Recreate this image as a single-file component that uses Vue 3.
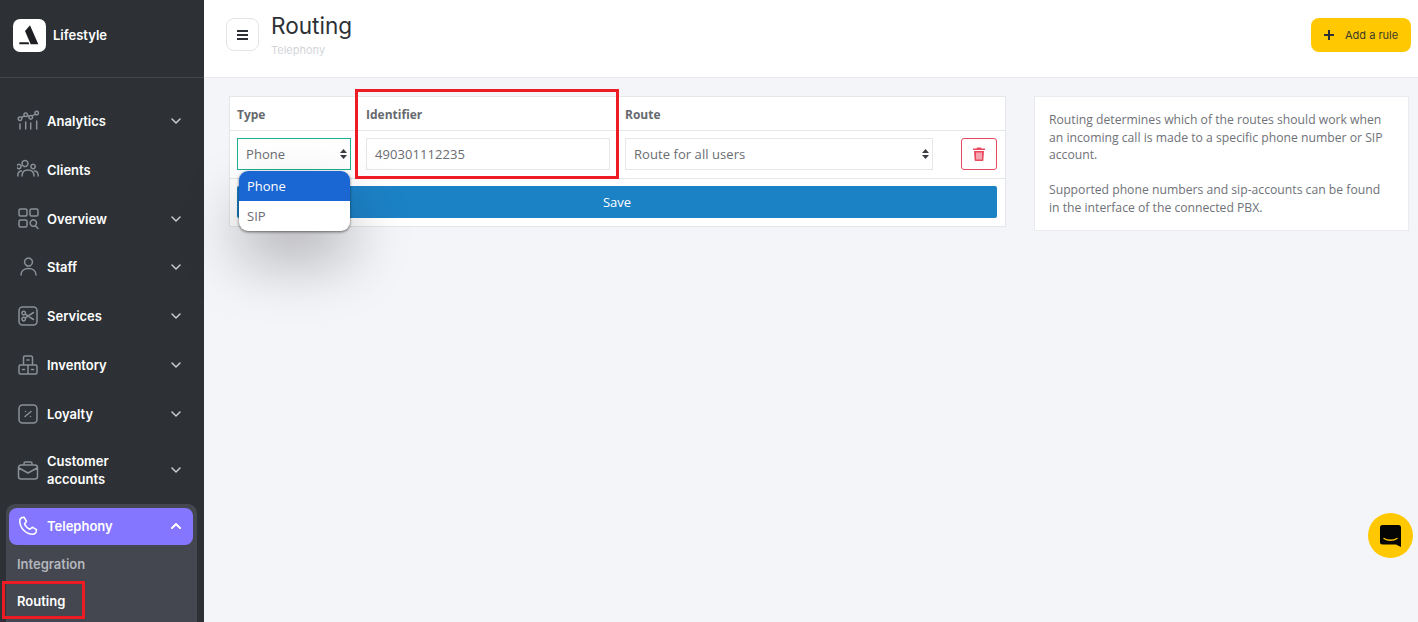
<script setup>
const nav = [
  { label: 'Analytics', chevron: true, d: 'M4.800 8.700a1.800 1.800 0 1 0 0 .1M10.500 4.700a1.800 1.800 0 1 0 0 .1M15.500 7.300a1.800 1.800 0 1 0 0 .1M21.500 3a1.800 1.800 0 1 0 0 .1M4.400 7.500 7.300 5.800M10.300 5.500l1.800 1M15.200 6.200l3-2.200M3 14v5M8.700 12v7M13.700 13v6M19.700 11v8' },
  { label: 'Clients', d: 'M11 4.500a3 3 0 1 0 0 .1M4 7.500a2.200 2.200 0 1 0 0 .1M18.300 7.500a2.200 2.200 0 1 0 0 .1M5 17c0-4 2.500-6 6-6s6 2 6 6M.8 17c0-3 1.200-5 3.700-5M21.200 17c0-3-1.200-5-3.700-5' },
  { label: 'Overview', chevron: true, d: 'M3.500 1h5a1.500 1.500 0 0 1 1.500 1.500v4a1.500 1.500 0 0 1-1.500 1.500h-5a1.500 1.500 0 0 1-1.500-1.500v-4a1.500 1.500 0 0 1 1.500-1.500zM14.500 1h5a1.500 1.500 0 0 1 1.500 1.500v4a1.500 1.500 0 0 1-1.500 1.500h-5a1.500 1.500 0 0 1-1.500-1.500v-4a1.500 1.500 0 0 1 1.500-1.500zM3.500 12h5a1.500 1.500 0 0 1 1.500 1.500v4a1.500 1.500 0 0 1-1.500 1.500h-5a1.500 1.500 0 0 1-1.500-1.500v-4a1.500 1.500 0 0 1 1.500-1.500zM19.500 15a3.200 3.200 0 1 0 0 .1M18.500 18l2.500 2.500' },
  { label: 'Staff', chevron: true, d: 'M15.500 6a4 4 0 1 0 0 .1M4 19c0-4 3-6.500 7.500-6.500s7.500 2.500 7.500 6.500' },
  { label: 'Services', chevron: true, d: 'M5.500 2h11a3.500 3.500 0 0 1 3.500 3.500v11a3.500 3.500 0 0 1-3.500 3.500h-11a3.500 3.500 0 0 1-3.500-3.500v-11a3.500 3.500 0 0 1 3.500-3.500zM8.500 8a1.800 1.800 0 1 0 0 .1M8.500 14a1.800 1.800 0 1 0 0 .1M8.300 9.200 16.500 14.500M8.300 12.800 16.500 7.500' },
  { label: 'Inventory', chevron: true, d: 'M8 2h6a1.500 1.500 0 0 1 1.500 1.500V11h-9V3.500A1.500 1.500 0 0 1 8 2zM3.500 11H11v9H3.500A1.500 1.500 0 0 1 2 18.500v-6A1.500 1.500 0 0 1 3.500 11zM11 11h7.500a1.500 1.500 0 0 1 1.500 1.500v6a1.500 1.500 0 0 1-1.500 1.500H11zM10 6h2M5.500 15.500h2M14.500 15.500h2' },
  { label: 'Loyalty', chevron: true, d: 'M5.500 2h11a3.500 3.500 0 0 1 3.500 3.500v11a3.500 3.500 0 0 1-3.500 3.500h-11a3.500 3.500 0 0 1-3.500-3.500v-11a3.500 3.500 0 0 1 3.500-3.500zM14 8.500 8 13.500M8.500 8.500v.1M13.500 13.500v.1' },
  { label: 'Customer accounts', chevron: true, two: true, d: 'M4 6h14a2.500 2.500 0 0 1 2.500 2.500v9a2.500 2.500 0 0 1-2.500 2.500H4a2.500 2.500 0 0 1-2.500-2.500v-9A2.500 2.500 0 0 1 4 6zM7 6V4.500A1.500 1.500 0 0 1 8.500 3h5A1.500 1.500 0 0 1 15 4.500V6M2 9l9 5 9-5' }
]
</script>

<template>
  <div class="page">
    <aside class="sidebar">
      <div class="brand">
        <div class="logo">
          <svg width="33" height="33" viewBox="0 0 33 33"><path d="M17 6.300 25.300 25.300h-7.600L12 12z" fill="#1d1f22" /><path d="M6.300 23.300h9.200l.8 2H6.300z" fill="#1d1f22" /></svg>
        </div>
        <span class="brand-name">Lifestyle</span>
      </div>
      <nav class="nav">
        <a v-for="item in nav" :key="item.label" class="item" :class="{ two: item.two }">
          <svg class="icon" width="22" height="22" viewBox="0 0 22 22"><path :d="item.d" /></svg>
          <span class="label">{{ item.label }}</span>
          <svg v-if="item.chevron" class="chev" width="10" height="6" viewBox="0 0 10 6"><path d="M1 1l4 4 4-4" /></svg>
        </a>
        <div class="group">
          <a class="item active">
            <svg class="icon" width="22" height="22" viewBox="0 0 22 22"><path d="M5 2.500 7 2.200l2.500 4.300-2 2.200c1 2.500 3 4.500 5.500 5.500l2.200-2 4.300 2.500-.3 2c-.5 1.500-2 2.500-3.500 2.500C9 19.200 2.800 13 2.800 6c0-1.500.9-3 2.200-3.500z" /></svg>
            <span class="label">Telephony</span>
            <svg class="chev" width="10" height="6" viewBox="0 0 10 6"><path d="M1 5l4-4 4 4" /></svg>
          </a>
          <a class="sub">Integration</a>
          <a class="sub current">Routing</a>
        </div>
      </nav>
    </aside>

    <div class="main">
      <header class="topbar">
        <button class="burger" type="button">
          <svg width="11" height="10" viewBox="0 0 11 10"><path d="M0 1h11M0 5h11M0 9h11" /></svg>
        </button>
        <div class="heading">
          <h1>Routing</h1>
          <p>Telephony</p>
        </div>
        <button class="add" type="button">
          <svg width="10" height="10" viewBox="0 0 10 10"><path d="M5 0v10M0 5h10" /></svg>
          <span>Add a rule</span>
        </button>
      </header>

      <section class="content">
        <div class="table">
          <div class="grid head">
            <span>Type</span>
            <span>Identifier</span>
            <span>Route</span>
          </div>
          <div class="grid row">
            <div class="field select focus">
              <span>Phone</span>
              <svg class="updown" width="7" height="10" viewBox="0 0 7 10"><path d="M3.500 0 7 4H0zM3.500 10 0 6h7z" /></svg>
            </div>
            <div class="field">490301112235</div>
            <div class="field select">
              <span>Route for all users</span>
              <svg class="updown" width="7" height="10" viewBox="0 0 7 10"><path d="M3.500 0 7 4H0zM3.500 10 0 6h7z" /></svg>
            </div>
            <button class="trash" type="button">
              <svg width="12" height="14" viewBox="0 0 12 14"><path fill-rule="evenodd" d="M0 1.500h3.500L4 .5h4l.5 1H12V3H0zM1 4h10l-.6 9a1 1 0 0 1-1 1H2.600a1 1 0 0 1-1-1zM3.500 5.500V12.500h1V5.500zM5.500 5.500V12.500h1V5.500zM7.500 5.500V12.500h1V5.500z" /></svg>
            </button>
          </div>
          <div class="save-row">
            <button class="save" type="button">Save</button>
          </div>
        </div>

        <aside class="info">
          <p>Routing determines which of the routes should work when an incoming call is made to a specific phone number or SIP account.</p>
          <p>Supported phone numbers and sip-accounts can be found in the interface of the connected PBX.</p>
        </aside>
      </section>
    </div>

    <div class="dropdown">
      <div class="opt selected">Phone</div>
      <div class="opt">SIP</div>
    </div>

    <div class="mark mark-id"></div>
    <div class="mark mark-route"></div>

    <div class="chat">
      <svg width="21" height="22" viewBox="0 0 21 22"><path d="M2.500 0h16A2.500 2.500 0 0 1 21 2.500V22l-5-2.500H2.500A2.500 2.500 0 0 1 0 17V2.500A2.500 2.500 0 0 1 2.500 0z" fill="#050505" /><path d="M4 13.500c3.500 2.300 9.500 2.300 13 0" fill="none" stroke="#ffc800" stroke-width="1.400" stroke-linecap="round" /></svg>
    </div>
  </div>
</template>

<style>
html, body { margin: 0; background: #f4f5f9; }
</style>

<style scoped>
.page {
  position: relative;
  display: flex;
  width: 100%;
  height: 622px;
  overflow: hidden;
  background: #f4f5f9;
  font-family: "Open Sans", sans-serif;
}
.sidebar {
  flex: 0 0 204px;
  height: 622px;
  overflow: hidden;
  background: #2d3136;
  font-family: Inter, sans-serif;
}
.brand {
  display: flex;
  align-items: center;
  gap: 7px;
  height: 77px;
  padding: 0 13px;
  border-bottom: 1px solid #43464b;
  box-sizing: content-box;
  width: 178px;
}
.logo {
  width: 33px;
  height: 33px;
  margin-top: -7px;
  background: #fff;
  border-radius: 7px;
}
.logo svg { display: block; }
.brand-name {
  margin-top: -7px;
  color: #fff;
  font-size: 13px;
  font-weight: 600;
}
.nav {
  display: flex;
  flex-direction: column;
  gap: 12px;
  padding: 24.600px 11px 0 9px;
}
.item {
  display: flex;
  align-items: center;
  gap: 8px;
  height: 36.800px;
  padding: 0 12px 0 8px;
  border-radius: 8px;
  color: #fff;
  font-size: 13px;
  font-weight: 600;
  line-height: 18px;
  box-sizing: border-box;
}
.item.two { height: 51px; }
.label { flex: 1; width: 100px; }
.two .label { flex: 0 0 80px; margin-right: auto; }
.icon { flex: 0 0 22px; fill: none; stroke: #8b8f96; stroke-width: 1.500; stroke-linecap: round; stroke-linejoin: round; }
.chev { flex: 0 0 10px; fill: none; stroke: #c9ccd1; stroke-width: 1.500; stroke-linecap: round; stroke-linejoin: round; }
.group {
  margin: -3.200px -4px 0 -3px;
  padding: 4px 4px 40px 3px;
  background: #44474f;
  border-radius: 9px;
}
.item.active { height: 37px; background: #8576ff; }
.active .icon { stroke: #fff; }
.active .chev { stroke: #fff; stroke-width: 2; }
.sub {
  display: flex;
  align-items: center;
  height: 37px;
  padding: 2px 0 0 8px;
  box-sizing: border-box;
  color: #b4b7bd;
  font-size: 13px;
  font-weight: 600;
}
.current { color: #fff; }
.main {
  flex: 1;
  min-width: 0;
  display: flex;
  flex-direction: column;
}
.topbar {
  display: flex;
  align-items: flex-start;
  height: 77px;
  padding: 0 7px 0 22px;
  background: #fff;
  border-bottom: 1px solid #e9ebf0;
  font-family: Inter, sans-serif;
}
.burger {
  display: flex;
  align-items: center;
  justify-content: center;
  width: 33px;
  height: 33px;
  margin-top: 18px;
  padding: 0;
  background: #fff;
  border: 1px solid #e2e4e9;
  border-radius: 8px;
}
.burger svg { fill: none; stroke: #2d3136; stroke-width: 2; }
.heading { margin-left: 12px; flex: 1; }
.heading h1 {
  margin: 11px 0 0;
  color: #2d3136;
  font-size: 22.600px;
  font-weight: 400;
  line-height: 30px;
}
.heading p {
  margin: 2px 0 0;
  color: #d3d5da;
  font-size: 11px;
  line-height: 14px;
}
.add {
  display: flex;
  align-items: center;
  gap: 11px;
  width: 100px;
  height: 34px;
  margin-top: 18px;
  padding: 0 0 0 13px;
  background: #ffc800;
  border: 0;
  border-radius: 8px;
  color: #3a3a2c;
  font-family: Inter, sans-serif;
  font-size: 11px;
}
.add svg { fill: none; stroke: #2d3136; stroke-width: 2; }
.content {
  display: flex;
  align-items: flex-start;
  gap: 28px;
  padding: 18px 9px 0 25px;
}
.table {
  width: 777px;
  box-sizing: border-box;
  background: #fff;
  border: 1px solid #e4e6ea;
  color: #6a6d72;
  font-size: 13px;
}
.grid {
  display: grid;
  grid-template-columns: 114px 244px 308px 1fr;
  column-gap: 15px;
  padding: 0 8px 0 7px;
}
.head {
  align-items: center;
  height: 32px;
  padding-top: 1px;
  font-size: 12px;
  font-weight: 700;
  color: #66696e;
  border-bottom: 1px solid #e4e6ea;
}
.row {
  align-items: start;
  height: 40px;
  padding-top: 7px;
  border-bottom: 1px solid #e4e6ea;
}
.field {
  display: flex;
  align-items: center;
  justify-content: space-between;
  height: 32px;
  box-sizing: border-box;
  padding: 0 8px;
  border: 1px solid #e4e6ea;
  font-size: 13px;
  letter-spacing: .06px;
  color: #6a6d72;
}
.select { padding-right: 3px; }
.focus { border-color: #1fb08f; }
.updown { fill: #3a3d42; }
.trash {
  justify-self: end;
  display: flex;
  align-items: center;
  justify-content: center;
  width: 36px;
  height: 32px;
  padding: 0;
  background: #fff;
  border: 1px solid #ea4a5f;
  border-radius: 3px;
}
.trash svg { fill: #ea4a5f; }
.save-row { padding: 7px 8px 8px 7px; }
.save {
  display: block;
  width: 100%;
  height: 32px;
  background: #1c82c6;
  border: 0;
  border-radius: 2px;
  color: #fff;
  font-family: "Open Sans", sans-serif;
  font-size: 13px;
}
.info {
  width: 375px;
  box-sizing: border-box;
  padding: 14px 20px 14px 14px;
  background: #fff;
  border: 1px solid #e9ebf0;
  color: #6f7278;
  font-size: 12.200px;
  line-height: 17.500px;
}
.info p { margin: 0 0 17.500px; }
.info p:last-child { margin: 0; }
.dropdown {
  position: absolute;
  left: 239px;
  top: 171px;
  width: 111px;
  overflow: hidden;
  background: #fff;
  border-radius: 9px;
  box-shadow: 0 1px 3px rgba(0, 0, 0, .55), 0 30px 60px rgba(0, 0, 0, .28);
  font-size: 13px;
  color: #6a6d72;
}
.opt {
  height: 30px;
  line-height: 30px;
  padding-left: 8px;
}
.selected { background: #1a66d2; color: #fff; }
.mark {
  position: absolute;
  box-sizing: border-box;
  border: 3px solid #ed1c24;
  pointer-events: none;
}
.mark-id { left: 355px; top: 89px; width: 264px; height: 90px; }
.mark-route { left: 2px; top: 581px; width: 83px; height: 38px; }
.chat {
  position: absolute;
  left: 1368px;
  top: 513px;
  display: flex;
  align-items: center;
  justify-content: center;
  width: 45px;
  height: 45px;
  border-radius: 50%;
  background: #ffc800;
}
</style>
